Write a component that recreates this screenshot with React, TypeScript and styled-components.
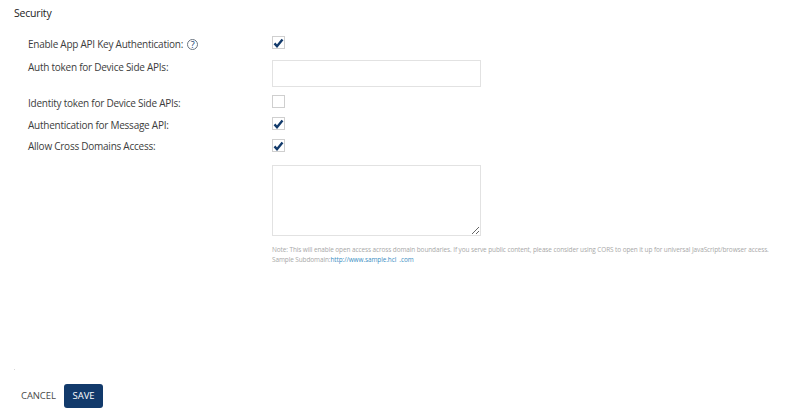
import React from "react";
import styled, { createGlobalStyle } from "styled-components";

const GlobalStyle = createGlobalStyle`
  html, body { margin: 0; padding: 0; background: #fff; }
  body { font-family: "Open Sans", "Liberation Sans", sans-serif; }
`;

const Page = styled.div`
  width: 800px;
  height: 420px;
  display: flex;
  flex-direction: column;
  overflow: hidden;
`;

const Content = styled.div`
  flex: 1;
  display: flex;
  flex-direction: column;
  padding: 6px 0 0 14px;
`;

const Title = styled.h2`
  margin: 0 0 14px;
  height: 15px;
  font-size: 10.5px;
  letter-spacing: -0.2px;
  line-height: 15px;
  font-weight: 500;
  color: #222;
`;

const Row = styled.div<{ $height: number }>`
  display: grid;
  grid-template-columns: 244px 1fr;
  flex: none;
  height: ${(p) => p.$height}px;
  margin-left: 14px;
`;

const Label = styled.label<{ $top: number }>`
  display: flex;
  align-items: flex-start;
  gap: 4px;
  font-size: 10px;
  letter-spacing: -0.25px;
  line-height: 14px;
  color: #3c3c3c;
  padding-top: ${(p) => p.$top}px;
`;

const Help = styled.span`
  display: inline-flex;
  align-items: center;
  justify-content: center;
  box-sizing: border-box;
  width: 11px;
  height: 11px;
  margin-top: 2px;
  border: 1px solid #6a7480;
  border-radius: 50%;
  font-size: 9px;
  line-height: 9px;
  color: #123a6b;
`;

const Check = styled.span<{ $top?: number }>`
  display: flex;
  align-items: center;
  justify-content: center;
  box-sizing: border-box;
  width: 13px;
  height: 13px;
  margin-top: ${(p) => p.$top ?? 0}px;
  border: 1px solid #cfcfcf;
  background: #fff;
`;

const Input = styled.input`
  display: block;
  box-sizing: border-box;
  width: 209px;
  height: 27px;
  border: 1px solid #e2e2e2;
  background: #fff;
  outline: none;
`;

const TextArea = styled.textarea`
  display: block;
  box-sizing: border-box;
  width: 209px;
  height: 71px;
  margin: 0;
  border: 1px solid #e2e2e2;
  background: #fff;
  outline: none;
`;

const Note = styled.p`
  margin: 9px 0 0 258px;
  font-size: 6.45px;
  letter-spacing: -0.09px;
  line-height: 10px;
  color: #a8a8a8;
  white-space: nowrap;
`;

const Sample = styled.a`
  color: #3d8fc4;
  text-decoration: none;
`;

const Speck = styled.span`
  width: 1px;
  height: 1px;
  margin: auto 0 14px 0;
  background: #d8d8d8;
`;

const Footer = styled.div`
  display: flex;
  align-items: center;
  gap: 9px;
  padding: 0 0 12px 21px;
`;

const Cancel = styled.button`
  width: 34px;
  border: 0;
  padding: 0 0 1px;
  background: none;
  font: inherit;
  font-size: 9.5px;
  letter-spacing: -0.1px;
  white-space: nowrap;
  color: #4a4a4a;
`;

const Save = styled.button`
  width: 39px;
  height: 24px;
  padding: 0 0 1px;
  border: 0;
  border-radius: 3px;
  background: #123a6b;
  font: inherit;
  font-size: 9.5px;
  letter-spacing: -0.1px;
  color: #fff;
`;

const Mark: React.FC = () => (
  <svg width="11" height="10" viewBox="0 0 11 10">
    <path d="M1.5 5.4 4 8.2l5.5-6.6" fill="none" stroke="#123a6b" strokeWidth="2.4" />
  </svg>
);

const App: React.FC = () => (
  <Page>
    <GlobalStyle />
    <Content>
      <Title>Security</Title>
      <Row $height={25}>
        <Label $top={2}>
          Enable App API Key Authentication: <Help>?</Help>
        </Label>
        <Check $top={1}>
          <Mark />
        </Check>
      </Row>
      <Row $height={35}>
        <Label $top={0}>Auth token for Device Side APIs:</Label>
        <Input />
      </Row>
      <Row $height={22}>
        <Label $top={1}>Identity token for Device Side APIs:</Label>
        <Check />
      </Row>
      <Row $height={22}>
        <Label $top={1}>Authentication for Message API:</Label>
        <Check>
          <Mark />
        </Check>
      </Row>
      <Row $height={26}>
        <Label $top={0}>Allow Cross Domains Access:</Label>
        <Check>
          <Mark />
        </Check>
      </Row>
      <Row $height={71}>
        <span />
        <TextArea />
      </Row>
      <Note>
        Note: This will enable open access across domain boundaries. If you serve public content, please consider using CORS to open it up for universal JavaScript/browser access.
        <br />
        Sample Subdomain:<Sample href="#">http://www.sample.hcl&nbsp;&nbsp;.com</Sample>
      </Note>
      <Speck />
    </Content>
    <Footer>
      <Cancel>CANCEL</Cancel>
      <Save>SAVE</Save>
    </Footer>
  </Page>
);

export default App;
